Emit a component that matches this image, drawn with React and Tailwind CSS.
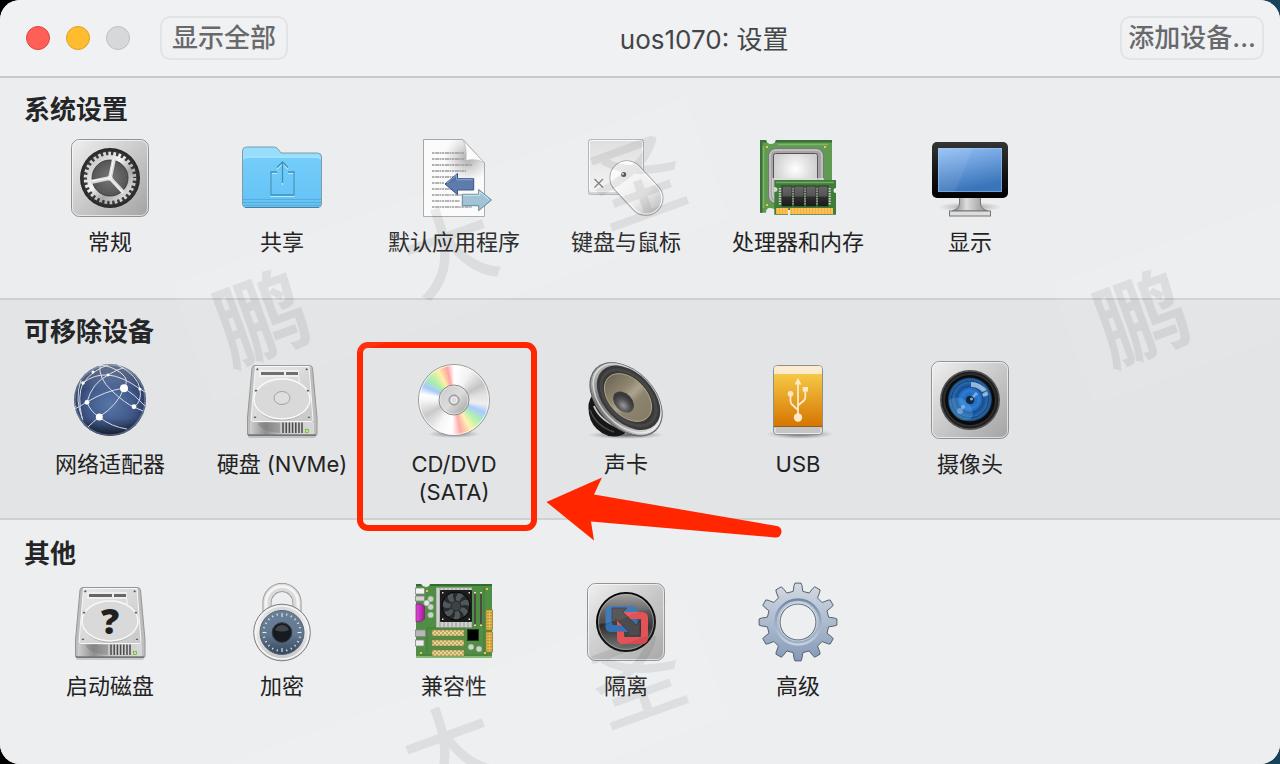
function Plate({ id }) {
  return (
    <>
      <defs>
        <linearGradient id={id} x1="0" y1="0" x2="1" y2="1">
          <stop offset="0" stopColor="#efefef" />
          <stop offset="1" stopColor="#a3a3a3" />
        </linearGradient>
      </defs>
      <rect x="1.5" y="1.5" width="77" height="77" rx="8" fill={`url(#${id})`} stroke="#929292" />
      <rect x="2.5" y="2.5" width="75" height="75" rx="7" fill="none" stroke="#fff" strokeOpacity=".6" />
    </>
  );
}

function GeneralIcon() {
  return (
    <svg viewBox="0 0 80 80" className="size-20">
      <defs>
        <linearGradient id="general-metal" x1="0" y1="0" x2="1" y2="1">
          <stop offset="0" stopColor="#bdbdbd" />
          <stop offset=".4" stopColor="#f4f4f4" />
          <stop offset=".65" stopColor="#a8a8a8" />
          <stop offset="1" stopColor="#ededed" />
        </linearGradient>
        <radialGradient id="general-well">
          <stop offset="0" stopColor="#777" />
          <stop offset=".6" stopColor="#555" />
          <stop offset="1" stopColor="#262626" />
        </radialGradient>
      </defs>
      <Plate id="general-plate" />
      <circle cx="40" cy="40" r="30" fill="url(#general-well)" />
      <circle cx="40" cy="40" r="24" fill="none" stroke="url(#general-metal)" strokeWidth="4.5" strokeDasharray="2.7 2.33" />
      <circle cx="40" cy="40" r="20.5" fill="none" stroke="url(#general-metal)" strokeWidth="5" />
      <circle cx="40" cy="40" r="18" fill="none" stroke="#333" strokeWidth=".8" />
      <path d="M40 40L44 21M40 40L54 55M40 40L21 44" stroke="#d9d9d9" strokeWidth="4" />
      <path d="M40 40L43.5 21M40 40L53 55M40 40L21 43" stroke="#fff" strokeWidth="1" />
      <circle cx="40" cy="40" r="2.5" fill="#eee" />
    </svg>
  );
}

function SharingIcon() {
  return (
    <svg viewBox="0 0 80 80" className="size-20">
      <defs>
        <linearGradient id="folder-front" x1="0" y1="0" x2="0" y2="1">
          <stop offset="0" stopColor="#74cdfa" />
          <stop offset="1" stopColor="#63c2f5" />
        </linearGradient>
      </defs>
      <path d="M.5 13q0-4 4-4H32q2.500 0 4 2l3 4H75.500q4 0 4 4V66q0 3.500-4 3.500H4.500q-4 0-4-3.500z" fill="#97defd" stroke="#7f9cab" />
      <path d="M1 24q0-4 4-4H75q4 0 4 4V65q0 4-4 4H5q-4 0-4-4z" fill="url(#folder-front)" />
      <path d="M2 20.500q1-1.500 4-1.500H74q3 0 4 1.500" fill="none" stroke="#a9e6ff" />
      <path d="M1 61.500H79M1 64.500H79M1 67.500H79" stroke="#54a6d3" strokeWidth=".8" />
      <path d="M3 69.500H77" stroke="#4b7f9b" />
      <path d="M35 34.500H29V57.500H52V34.500H46M40.500 46V24M35 30L40.500 24.500L46 30" fill="none" stroke="#b5eaff" strokeWidth="1.200" transform="translate(0 1)" />
      <path d="M35 34H29V57H52V34H46M40.500 45V24M35 29.500L40.500 24L46 29.500" fill="none" stroke="#3e93bd" strokeWidth="1.400" />
    </svg>
  );
}

const docLines = [50, 50, 58, 52, 44, 30, 38, 48, 46, 58];

function DefaultAppsIcon() {
  return (
    <svg viewBox="0 0 80 80" className="size-20">
      <defs>
        <linearGradient id="doc-fold" x1="0" y1="1" x2="1" y2="0">
          <stop offset="0" stopColor="#fff" />
          <stop offset=".6" stopColor="#fafafa" />
          <stop offset="1" stopColor="#dcdcdc" />
        </linearGradient>
        <radialGradient id="doc-shade" cx="54" cy="20" r="24" gradientUnits="userSpaceOnUse">
          <stop offset="0" stopColor="#777" stopOpacity=".6" />
          <stop offset="1" stopColor="#999" stopOpacity="0" />
        </radialGradient>
      </defs>
      <path d="M9.500 1.500H49L70.500 25V78.500H9.500z" fill="#fbfbfb" stroke="#a7a7a7" />
      <path d="M10 2H49L70 25V50H10z" fill="url(#doc-shade)" />
      {docLines.map((end, i) => (
        <path key={i} d={`M18 ${15 + i * 6}H${end}`} stroke="#999" strokeWidth="1.3" strokeDasharray="2.5 .7 4 .5 1.5 .6" />
      ))}
      <path d="M48.500 1.500Q53 8 52 22.500Q62 20 70.500 25z" fill="url(#doc-fold)" stroke="#b5b5b5" strokeWidth=".7" />
      <path d="M31 46L43.500 35.500V40.700H59.700V52H43.500V56.700z" fill="#5673a6" stroke="#2f4c85" />
      <path d="M33 45L42.500 37V41.700H58.700" fill="none" stroke="#86a2cf" />
      <path d="M77.500 62L64.700 51.500V56.300H48.300V67.700H64.700V72.700z" fill="#9cc0d3" stroke="#598199" />
      <path d="M49.300 57.300H65.700V53.800L75 61.500" fill="none" stroke="#d1e5ee" />
    </svg>
  );
}

function KeyboardMouseIcon() {
  return (
    <svg viewBox="0 0 80 80" className="size-20">
      <defs>
        <linearGradient id="key-face" x1="0" y1="0" x2="0" y2="1">
          <stop offset="0" stopColor="#dedede" />
          <stop offset="1" stopColor="#f3f3f3" />
        </linearGradient>
        <linearGradient id="mouse-body" x1="0" y1="0" x2="1" y2="0">
          <stop offset="0" stopColor="#fdfdfd" />
          <stop offset=".65" stopColor="#ededed" />
          <stop offset="1" stopColor="#bdbdbd" />
        </linearGradient>
      </defs>
      <rect x="2.500" y="1.500" width="55" height="55" rx="2" fill="#d5d5d5" stroke="#b3b3b3" />
      <rect x="3.500" y="2.500" width="53" height="51" rx="2" fill="url(#key-face)" stroke="#fafafa" />
      <path d="M8.500 41L17 49.500M17 41L8.500 49.500" stroke="#777" strokeWidth="1.200" />
      <g transform="rotate(47 50.500 50)">
        <rect x="20" y="34" width="62" height="34" rx="17" fill="#000" opacity=".12" />
        <rect x="19.500" y="33" width="62" height="34" rx="17" fill="url(#mouse-body)" stroke="#a6a6a6" />
        <rect x="20.700" y="34.200" width="59.600" height="31.600" rx="16" fill="none" stroke="#fff" />
      </g>
      <circle cx="37.700" cy="36.500" r="2.500" fill="#555" />
      <circle cx="37" cy="36" r="1" fill="#eee" />
    </svg>
  );
}

function ProcessorIcon() {
  return (
    <svg viewBox="0 0 80 80" className="size-20">
      <defs>
        <radialGradient id="cpu-face" cx=".5" cy=".35" r=".7">
          <stop offset="0" stopColor="#fff" />
          <stop offset="1" stopColor="#bcbcbc" />
        </radialGradient>
        <linearGradient id="ram-chip" x1="0" y1="0" x2="0" y2="1">
          <stop offset="0" stopColor="#686868" />
          <stop offset=".5" stopColor="#555" />
          <stop offset=".55" stopColor="#2e2e2e" />
          <stop offset="1" stopColor="#1b1b1b" />
        </linearGradient>
      </defs>
      <path d="M2 2H8Q9 6 13 6T18 2H74V74H18Q17 70 12 70Q8 70 8 74.700H2z" fill="#5f9b51" />
      <path d="M2 2H8L9 4.500H4.500V74.700H2zM18 2H74V4.500H17z" fill="#3c7037" />
      <path d="M5.500 8V70M20 6.500H70" stroke="#7db56c" strokeWidth="1.500" />
      <path d="M8 8h2v2h-2zM66 8h2v2h-2zM8 66h2v2h-2z" fill="#ffbd43" />
      <rect x="10.500" y="10.500" width="55" height="55" rx="7" fill="#a5a5a5" stroke="#777" />
      <rect x="12" y="12" width="52" height="52" rx="6" fill="none" stroke="#d7d7d7" />
      <rect x="15.500" y="15.500" width="44" height="44" rx="2" fill="url(#cpu-face)" stroke="#555" />
      <path d="M14 40H66V65H20Q14 62 14 56z" fill="#ddd" opacity=".75" />
      <path d="M16.300 42H78V50Q75.500 50 75.500 52.500T78 55V76.700H16.300V54Q19.500 54 19.500 51.500T16.300 49z" fill="#3f7b39" />
      <path d="M18 44.500H76" stroke="#74aa67" strokeWidth="1.500" />
      <path d="M22 50V67M35 50V67M47 50V67M59 50V67M71.500 50V67" stroke="#c8c8c8" strokeWidth="2.500" strokeDasharray="1.500 1" />
      {[24, 36, 48, 60].map((x) => (
        <rect key={x} x={x} y="48" width="10" height="20" fill="url(#ram-chip)" stroke="#222" strokeWidth=".7" />
      ))}
      <path d="M18 70H30V76H18zM32 70H75V76H32z" fill="#ffc052" />
      <path d="M18 73H75" stroke="#dd972e" strokeWidth="6" strokeDasharray=".6 2.400" opacity=".6" />
      <rect x="30" y="72" width="2" height="5" fill="#ecedef" />
    </svg>
  );
}

function DisplayIcon() {
  return (
    <svg viewBox="0 0 80 80" className="size-20">
      <defs>
        <linearGradient id="screen" x1="0" y1="0" x2=".3" y2="1">
          <stop offset="0" stopColor="#96c2f8" />
          <stop offset="1" stopColor="#3a74b9" />
        </linearGradient>
        <linearGradient id="bezel" x1="0" y1="0" x2="0" y2="1">
          <stop offset="0" stopColor="#343434" />
          <stop offset=".6" stopColor="#111" />
          <stop offset="1" stopColor="#000" />
        </linearGradient>
        <linearGradient id="neck" x1="0" y1="0" x2="1" y2="0">
          <stop offset="0" stopColor="#777" />
          <stop offset=".4" stopColor="#ddd" />
          <stop offset="1" stopColor="#8c8c8c" />
        </linearGradient>
        <radialGradient id="stand-shadow">
          <stop offset="0" stopColor="#555" stopOpacity=".6" />
          <stop offset="1" stopColor="#777" stopOpacity="0" />
        </radialGradient>
      </defs>
      <ellipse cx="40" cy="69" rx="32" ry="5" fill="url(#stand-shadow)" />
      <path d="M29.500 59H50.500V66Q51 71 58 73H22Q29 71 29.500 66z" fill="url(#neck)" stroke="#777" />
      <rect x="19.500" y="73" width="41" height="5" fill="#ddd" stroke="#777" />
      <rect x="2" y="4" width="76" height="56" rx="5" fill="url(#bezel)" />
      <rect x="8" y="10" width="64" height="44" fill="url(#screen)" />
      <path d="M8 10H43L25 54H8z" fill="#fff" opacity=".07" />
      <rect x="8.500" y="10.500" width="63" height="43" fill="none" stroke="#a4c9f5" strokeOpacity=".5" />
    </svg>
  );
}

function NetworkIcon() {
  return (
    <svg viewBox="0 0 80 80" className="size-20">
      <defs>
        <radialGradient id="globe" cx=".5" cy=".55" r=".55">
          <stop offset="0" stopColor="#5875a8" />
          <stop offset=".6" stopColor="#41598a" />
          <stop offset="1" stopColor="#223356" />
        </radialGradient>
        <linearGradient id="globe-shade" x1="0" y1="0" x2="0" y2="1">
          <stop offset="0" stopColor="#fff" stopOpacity=".3" />
          <stop offset=".35" stopColor="#fff" stopOpacity="0" />
          <stop offset=".75" stopColor="#000" stopOpacity="0" />
          <stop offset="1" stopColor="#000" stopOpacity=".6" />
        </linearGradient>
      </defs>
      <circle cx="40" cy="40" r="36" fill="url(#globe)" />
      <circle cx="40" cy="40" r="36" fill="url(#globe-shade)" />
      <g fill="none" stroke="#fff" strokeWidth="1" opacity=".8">
        <path d="M54 28Q35 31 17 42T6 46M54 28Q48 45 29 57Q22 63 18 67M54 28Q64 34 75 46" />
        <path d="M29 57Q42 67 57 69M17 42Q20 51 29 57M17 42Q22 23 38 15Q50 8 54 8" />
        <path d="M30 5Q28 18 42 31T64 47L73 51M30 5Q42 6 51 13T54 28" />
        <path d="M13 23Q24 14 38 15T70 29L75 32M13 23Q23 10 38 5M13 23Q7 36 12 58" />
        <path d="M11 20Q4 40 13 60M48 5Q68 16 70 29T64 47" />
      </g>
      <g fill="#fff">
        <circle cx="54" cy="28.300" r="4" />
        <circle cx="29.300" cy="57" r="3.500" />
        <circle cx="64" cy="46.700" r="2.400" />
        <circle cx="17" cy="42.300" r="2.400" />
        <circle cx="70" cy="29" r="1.600" />
        <circle cx="13" cy="23" r="1.800" />
        <circle cx="38" cy="15" r="1.400" />
        <circle cx="23" cy="12" r="1.500" />
      </g>
      <circle cx="40" cy="40" r="35" fill="none" stroke="#c3d0ea" strokeOpacity=".35" strokeWidth="1.500" />
    </svg>
  );
}

const screws = [
  [15.3, 9.3],
  [64.7, 9.3],
  [14, 30.7],
  [66, 30.7],
  [13, 57.3],
  [67, 57.3],
];

function DriveIcon({ id, question }) {
  return (
    <svg viewBox="0 0 80 80" className="size-20">
      <defs>
        <linearGradient id={`${id}-top`} x1="0" y1="0" x2="1" y2="1">
          <stop offset="0" stopColor="#e9e9e9" />
          <stop offset="1" stopColor="#c7c7c7" />
        </linearGradient>
        <linearGradient id={`${id}-front`} x1="0" y1="0" x2="1" y2="0">
          <stop offset="0" stopColor="#cfcfcf" />
          <stop offset=".25" stopColor="#8f8f8f" />
          <stop offset=".5" stopColor="#c9c9c9" />
          <stop offset="1" stopColor="#d8d8d8" />
        </linearGradient>
      </defs>
      <rect x="6" y="73" width="68" height="5" rx="2" fill="#000" opacity=".15" />
      <path d="M13 5.500H67.500Q70 5.500 70.500 8L75 58V74Q75 75.500 73.500 75.500H7Q5.500 75.500 5.500 74V58L10 8Q10.500 5.500 13 5.500z" fill="#bdbdbd" stroke="#969696" />
      <path d="M13.500 6.500H67L71 60Q71 61.500 69 61.500H11Q9 61.500 9 60z" fill={`url(#${id}-top)`} stroke="#f7f7f7" />
      <rect x="8" y="62" width="64" height="12.500" fill={`url(#${id}-front)`} />
      <path d="M16 63H38V73Q22 72 17 66z" fill="#777" opacity=".45" />
      <path d="M41 62.500V73M44.200 62.500V73M47.400 62.500V73M50.600 62.500V73M53.800 62.500V73M57 62.500V73M60 62.500V73" stroke="#4a4a4a" strokeWidth="1.500" />
      <path d="M6 75H74" stroke="#555" strokeWidth="1.200" />
      <rect x="63.500" y="69.500" width="3" height="3" fill="#a8ff60" stroke="#68973b" strokeWidth=".6" />
      <ellipse cx="40" cy="40" rx="28" ry="20.500" fill="#a8a8a8" />
      <ellipse cx="40" cy="39" rx="28" ry="20" fill="#d9d9d9" stroke="#f9f9f9" strokeWidth="1.400" />
      <rect x="17" y="10" width="40" height="7" fill="#eee" />
      <path d="M57 17V23" stroke="#f6f6f6" />
      <rect x="19" y="12" width="23" height="3" fill="#666" />
      <rect x="44" y="12" width="12" height="3" fill="#666" />
      {!question && <ellipse cx="40" cy="38" rx="8" ry="6.500" fill="#dedede" stroke="#a2a2a2" />}
      {screws.map(([x, y]) => (
        <circle key={`${x}-${y}`} cx={x} cy={y} r="1.400" fill="#555" stroke="#eee" strokeWidth=".7" />
      ))}
      {question && (
        <text x="40" y="52" textAnchor="middle" fill="#202020" className="font-['Open_Sans',sans-serif] text-[36px] font-extrabold">
          ?
        </text>
      )}
    </svg>
  );
}

function DiscIcon() {
  return (
    <svg viewBox="0 0 80 80" className="size-20">
      <defs>
        <radialGradient id="disc-shadow">
          <stop offset="0" stopColor="#333" stopOpacity=".6" />
          <stop offset="1" stopColor="#555" stopOpacity="0" />
        </radialGradient>
        <linearGradient id="disc-hub" x1="0" y1="0" x2="1" y2="1">
          <stop offset="0" stopColor="#c9c9c9" />
          <stop offset=".5" stopColor="#dcdcdc" />
          <stop offset="1" stopColor="#9b9b9b" />
        </linearGradient>
      </defs>
      <ellipse cx="40" cy="74" rx="26" ry="4" fill="url(#disc-shadow)" />
      <foreignObject x="4" y="4" width="72" height="72">
        <div className="size-[72px] rounded-full border border-[#999] bg-[conic-gradient(#fff_0deg,#f2f2f2_30deg,#c4c4c4_62deg,#e2e2e2_80deg,#eee_98deg,#a9caff_112deg,#b0f0b0_130deg,#fff3ae_150deg,#ffa9a9_168deg,#fff_184deg,#f6f6f6_210deg,#c9c9c9_242deg,#f5f5f5_268deg,#fff_280deg,#a9c8ff_294deg,#a9efad_312deg,#fff0a6_332deg,#ffa3a3_348deg,#fff_360deg)]" />
      </foreignObject>
      <circle cx="40" cy="40" r="34.500" fill="none" stroke="#fff" strokeOpacity=".7" />
      <circle cx="40" cy="40" r="15" fill="url(#disc-hub)" stroke="#888" />
      <circle cx="40" cy="40" r="14" fill="none" stroke="#eee" strokeOpacity=".6" />
      <circle cx="40" cy="40" r="5" fill="#c9c9c9" stroke="#8b8b8b" />
      <circle cx="40" cy="40" r="3" fill="#ddd" stroke="#eee" />
    </svg>
  );
}

function SoundIcon() {
  return (
    <svg viewBox="0 0 80 80" className="size-20">
      <defs>
        <linearGradient id="speaker-rim" x1="0" y1="0" x2="1" y2="0">
          <stop offset="0" stopColor="#b9b9b9" />
          <stop offset=".3" stopColor="#777" />
          <stop offset=".6" stopColor="#8b8b8b" />
          <stop offset="1" stopColor="#e6e6e6" />
        </linearGradient>
        <linearGradient id="speaker-cone" x1="0" y1="0" x2="1" y2="0">
          <stop offset="0" stopColor="#6f6758" />
          <stop offset=".35" stopColor="#91876f" />
          <stop offset=".5" stopColor="#aca48f" />
          <stop offset=".65" stopColor="#8d8470" />
          <stop offset="1" stopColor="#857b66" />
        </linearGradient>
        <radialGradient id="speaker-cap" cx=".6" cy=".65">
          <stop offset="0" stopColor="#999" />
          <stop offset=".6" stopColor="#555" />
          <stop offset="1" stopColor="#393939" />
        </radialGradient>
        <radialGradient id="speaker-shadow">
          <stop offset="0" stopColor="#222" stopOpacity=".7" />
          <stop offset="1" stopColor="#555" stopOpacity="0" />
        </radialGradient>
      </defs>
      <ellipse cx="40" cy="75" rx="38" ry="4" fill="url(#speaker-shadow)" />
      <path d="M6 36Q1 42 3 54Q5 66 16 73Q26 79 36 75Q41 73 42 68L40 50z" fill="#161616" />
      <path d="M4 50Q10 66 28 72" fill="none" stroke="#4a4a4a" strokeWidth="1.500" />
      <path d="M8 46Q14 61 36 69" fill="none" stroke="#c6c6c6" strokeWidth="2" />
      <g transform="rotate(46 40.300 39)">
        <ellipse cx="40.300" cy="39.500" rx="43.500" ry="28.500" fill="#5e5e5e" />
        <ellipse cx="40.300" cy="39" rx="42.500" ry="28" fill="url(#speaker-rim)" stroke="#777" />
        <ellipse cx="40.300" cy="38" rx="40.500" ry="26" fill="none" stroke="#eee" strokeWidth="1.500" opacity=".7" />
        <ellipse cx="41" cy="36.500" rx="38" ry="24.500" fill="#393939" />
        <ellipse cx="41" cy="36.500" rx="33" ry="21" fill="none" stroke="#474747" strokeWidth="3" />
      </g>
      <ellipse cx="42" cy="37.500" rx="28" ry="18.500" fill="url(#speaker-cone)" stroke="#c0b391" strokeWidth=".8" transform="rotate(46 42 37.500)" />
      <ellipse cx="37.500" cy="42" rx="12" ry="8.500" fill="url(#speaker-cap)" transform="rotate(46 37.500 42)" />
    </svg>
  );
}

function UsbIcon() {
  return (
    <svg viewBox="0 0 80 80" className="size-20">
      <defs>
        <linearGradient id="usb-orange" x1="0" y1="0" x2="0" y2="1">
          <stop offset="0" stopColor="#f6c846" />
          <stop offset="1" stopColor="#d57600" />
        </linearGradient>
        <radialGradient id="usb-shadow">
          <stop offset="0" stopColor="#222" stopOpacity=".7" />
          <stop offset="1" stopColor="#555" stopOpacity="0" />
        </radialGradient>
      </defs>
      <ellipse cx="42" cy="74" rx="33" ry="5" fill="url(#usb-shadow)" />
      <rect x="15.500" y="5.500" width="49" height="69" rx="4" fill="#c5c5c5" stroke="#8e8e8e" />
      <path d="M16 14V9Q16 6 19 6H61Q64 6 64 9V14z" fill="#faebd1" />
      <rect x="16" y="14" width="48" height="52" fill="url(#usb-orange)" />
      <path d="M16 66.500H64" stroke="#8a6025" />
      <path d="M17 68V72Q17 73.500 19 73.500H61Q63 73.500 63 72V68" fill="none" stroke="#eee" />
      <g fill="#ffe9c8" stroke="#ffe9c8">
        <path d="M40 22V56M32.500 34V41Q32.500 43 34 44.500L40 50M47.300 30V37Q47.300 39 46 40.500L40 45.500" fill="none" strokeWidth="1.800" />
        <path d="M40 18L43.500 24.500H36.500z" stroke="none" />
        <circle cx="32.500" cy="33.700" r="2.800" stroke="none" />
        <rect x="44.700" y="27" width="5.300" height="4.500" stroke="none" />
        <circle cx="40" cy="57.500" r="4.200" stroke="none" />
      </g>
    </svg>
  );
}

function CameraIcon() {
  return (
    <svg viewBox="0 0 80 80" className="size-20">
      <defs>
        <radialGradient id="lens">
          <stop offset="0" stopColor="#1b4f8c" />
          <stop offset=".4" stopColor="#2b7dd6" />
          <stop offset=".65" stopColor="#1c5296" />
          <stop offset=".85" stopColor="#3176bd" />
          <stop offset="1" stopColor="#153c66" />
        </radialGradient>
      </defs>
      <Plate id="camera-plate" />
      <circle cx="40" cy="40" r="30" fill="#505050" />
      <circle cx="40" cy="40" r="27.500" fill="#2f2f2f" stroke="#1d1d1d" strokeWidth="1.500" />
      <circle cx="40" cy="40" r="25" fill="#0b0b0b" />
      <circle cx="40" cy="39.500" r="22" fill="url(#lens)" />
      <circle cx="40" cy="39.500" r="18.500" fill="none" stroke="#174a82" strokeWidth="1.500" />
      <circle cx="40" cy="39.500" r="13" fill="none" stroke="#164780" />
      <path d="M19 40Q28 34 37 42T41 59Q29 64 22 52Q18 46 19 40z" fill="#69b4ea" opacity=".3" />
      <path d="M41 22Q50 22 57 30L52 32Q48 27 41 27z" fill="#c3ddf4" opacity=".7" />
      <path d="M52 34L57 31L58.500 35L53.500 37z" fill="#dcecfb" opacity=".6" />
      <path d="M40 40L47 33" stroke="#a5ccf5" strokeWidth="3" opacity=".6" />
      <circle cx="40" cy="40" r="4" fill="#102740" />
      <circle cx="41.500" cy="39" r="1.500" fill="#8ea9c4" />
      <circle cx="33" cy="47" r="2" fill="#bce0fa" opacity=".5" />
      <circle cx="30" cy="51" r="3" fill="#bce0fa" opacity=".4" />
    </svg>
  );
}

function LockIcon() {
  const ticks = Array.from({ length: 24 }, (_, i) => i * 15);
  return (
    <svg viewBox="0 0 80 80" className="size-20">
      <defs>
        <linearGradient id="lock-metal" x1="0" y1="0" x2="0" y2="1">
          <stop offset="0" stopColor="#d3d3d3" />
          <stop offset=".4" stopColor="#f0f0f0" />
          <stop offset="1" stopColor="#c4c4c4" />
        </linearGradient>
        <linearGradient id="lock-dial" x1="0" y1="0" x2="0" y2="1">
          <stop offset="0" stopColor="#6b819b" />
          <stop offset=".55" stopColor="#63788e" />
          <stop offset="1" stopColor="#32475c" />
        </linearGradient>
      </defs>
      <path d="M25 36V20.600a15 15 0 0 1 30 0V36" fill="none" stroke="#8d8d8d" strokeWidth="9" />
      <path d="M25 36V20.600a15 15 0 0 1 30 0V36" fill="none" stroke="#dadada" strokeWidth="7.500" />
      <path d="M24 30V20.600a16 16 0 0 1 32 0V30" fill="none" stroke="#f4f4f4" strokeWidth="3" />
      <circle cx="40" cy="50.500" r="28.300" fill="url(#lock-metal)" stroke="#808080" />
      <circle cx="40" cy="50.500" r="26.500" fill="none" stroke="#f6f6f6" strokeWidth="1.500" />
      <circle cx="40" cy="50.500" r="22" fill="url(#lock-dial)" stroke="#54616f" />
      {ticks.map((deg) => (
        <path key={deg} d={deg % 90 === 0 ? 'M40 31V35' : 'M40 31V33'} stroke="#e4ebf2" strokeWidth="1.100" transform={`rotate(${deg} 40 50.500)`} />
      ))}
      <circle cx="40" cy="50.500" r="9.800" fill="#171b1f" stroke="#2e3943" />
      <path d="M33 48Q35 43 40 43T47 48Q40 51 33 48z" fill="#5b636a" opacity=".6" />
    </svg>
  );
}

function BoardIcon() {
  const blades = [0, 51, 103, 154, 206, 257, 309];
  return (
    <svg viewBox="0 0 80 80" className="size-20">
      <defs>
        <pattern id="gold-pins" width="4" height="4" patternUnits="userSpaceOnUse">
          <rect width="4" height="4" fill="#c2aa60" />
          <path d="M0 0H2V2H0zM2 2H4V4H2z" fill="#e4d69c" />
        </pattern>
        <linearGradient id="magenta" x1="0" y1="0" x2="1" y2="0">
          <stop offset="0" stopColor="#e04ad6" />
          <stop offset="1" stopColor="#a31b97" />
        </linearGradient>
      </defs>
      <path d="M2 2H7Q9 5 12 5T16 2H78V76H2z" fill="#508e45" />
      <path d="M16 2H78V4H16zM2 2H7L8 4H2z" fill="#346b30" />
      <path d="M2 75H78" stroke="#85bb71" strokeWidth="2" />
      <path d="M13 70V46H52M70 6V70M6 73H74" fill="none" stroke="#3c7635" strokeWidth=".7" />
      <path d="M12 8h2v2h-2zM72 6h2v2h-2zM6 70h2v2h-2zM70 70h2v2h-2z" fill="#ffc04a" />
      <rect x="22" y="5.500" width="36" height="40" fill="#b5b5b5" />
      <path d="M24 6V45M28 6V45M32 6V45M36 6V45M40 6V45M44 6V45M48 6V45M52 6V45M56 6V45" stroke="#dadada" strokeWidth="1.500" />
      <rect x="26" y="8" width="32" height="32" rx="1" fill="#1c1c1c" />
      <circle cx="42" cy="24" r="14" fill="#262b2d" stroke="#050505" />
      {blades.map((deg) => (
        <path key={deg} d="M42 20Q41 13 45 11Q49 12 50 14Q46 16 45 21z" fill="#50585a" transform={`rotate(${deg} 42 24)`} />
      ))}
      <circle cx="42" cy="24" r="5" fill="#3b4346" stroke="#24292b" />
      <path d="M28 10h1.500v1.500H28zM54.500 10H56v1.500h-1.500zM28 36.500h1.500V38H28zM54.500 36.500H56V38h-1.500z" fill="#ddd" />
      <path d="M61 10V44M67 10V44" stroke="#4b4b43" strokeWidth="2" />
      <path d="M60 10h2v1.500h-2zM66 10h2v1.500h-2zM60 42.500h2V44h-2zM66 42.500h2V44h-2z" fill="#f2dfa2" />
      <g fill="url(#gold-pins)" stroke="#8b793e" strokeWidth=".6">
        <rect x="18" y="48" width="32" height="6" />
        <rect x="18" y="58" width="32" height="6" />
        <rect x="18" y="68" width="32" height="6" />
      </g>
      <g fill="#e6bd50" stroke="#967a30" strokeWidth=".8">
        <rect x="72" y="28" width="6.500" height="20" />
        <rect x="72" y="50" width="6.500" height="20" />
      </g>
      <path d="M74 30V47M77 30V47M74 52V69M77 52V69" stroke="#9c6d1b" strokeDasharray="1.500 1.500" />
      <rect x="53.500" y="47.500" width="11" height="11" fill="#000" stroke="#263420" />
      <g stroke="#858585" strokeWidth=".8">
        <rect x="1.500" y="6" width="9" height="6" fill="#f3f3f3" />
        <rect x="1.500" y="14" width="9" height="5" fill="#d3d3d3" />
        <rect x="1.500" y="48" width="10" height="6.500" fill="#b7b7b7" />
        <rect x="1.500" y="58" width="8.500" height="6" fill="#ececec" />
      </g>
      <path d="M2 22H6L10.500 24V37L6 39.700H2z" fill="url(#magenta)" stroke="#7c2175" strokeWidth=".7" />
      <g fill="#c8d7c5" stroke="#7f967a" strokeWidth=".6">
        <circle cx="16.700" cy="17" r="3" />
        <circle cx="16.700" cy="25" r="3" />
        <circle cx="16.700" cy="33" r="3" />
        <circle cx="12.700" cy="21" r="3" fill="#e3ebe1" />
        <circle cx="57" cy="65" r="3" />
        <circle cx="65" cy="67" r="3" />
      </g>
    </svg>
  );
}

function IsolationIcon() {
  return (
    <svg viewBox="0 0 80 80" className="size-20">
      <defs>
        <linearGradient id="iso-well" x1="0" y1="0" x2="0" y2="1">
          <stop offset="0" stopColor="#9a9a9a" />
          <stop offset=".35" stopColor="#4b4b4b" />
          <stop offset=".6" stopColor="#292929" />
          <stop offset="1" stopColor="#777" />
        </linearGradient>
      </defs>
      <Plate id="iso-plate" />
      <circle cx="40" cy="40" r="29" fill="url(#iso-well)" stroke="#050505" strokeWidth="2" />
      <circle cx="40" cy="40" r="27.500" fill="none" stroke="#bbb" strokeOpacity=".6" />
      <rect x="23" y="27.500" width="25" height="19" rx="2" fill="none" stroke="#2869ad" strokeWidth="7" />
      <rect x="34.500" y="33.500" width="24" height="25" rx="2" fill="none" stroke="#e1484c" strokeWidth="7" />
      <path d="M28 46.500H48V38" fill="none" stroke="#2869ad" strokeWidth="6" />
      <path d="M26 26H41L37 30L50 43L54 39V54H39L43 50L30 37L26 41z" fill="#414144" stroke="#262626" strokeWidth=".7" />
      <path d="M12 42A28 28 0 0 1 65 27Q49 31 39 36T12 42z" fill="#fff" opacity=".12" />
    </svg>
  );
}

const cogPath = (() => {
  const teeth = 12;
  const profile = [
    [31, -9],
    [37, -6],
    [39, -4.5],
    [39, 4.5],
    [37, 6],
    [31, 9],
  ];
  const points = [];
  for (let i = 0; i < teeth; i++) {
    profile.forEach(([r, offset]) => {
      const a = ((i * 360) / teeth + offset) * (Math.PI / 180);
      points.push(`${(40 + r * Math.sin(a)).toFixed(2)} ${(40 - r * Math.cos(a)).toFixed(2)}`);
    });
  }
  return `M${points.join('L')}zM58 40a18 18 0 1 0-36 0a18 18 0 1 0 36 0z`;
})();

function AdvancedIcon() {
  return (
    <svg viewBox="0 0 80 80" className="size-20">
      <defs>
        <linearGradient id="cog" x1="0" y1="0" x2="0" y2="1">
          <stop offset="0" stopColor="#d3dae3" />
          <stop offset=".5" stopColor="#adbbce" />
          <stop offset="1" stopColor="#8499b7" />
        </linearGradient>
        <linearGradient id="cog-groove" x1="0" y1="0" x2="0" y2="1">
          <stop offset="0" stopColor="#7288a7" />
          <stop offset="1" stopColor="#c5d1e0" />
        </linearGradient>
      </defs>
      <path d={cogPath} fill="url(#cog)" fillRule="evenodd" stroke="#58616c" strokeLinejoin="round" />
      <circle cx="40" cy="40" r="22.500" fill="none" stroke="url(#cog-groove)" strokeWidth="2.500" />
      <circle cx="40" cy="40" r="19" fill="none" stroke="#e4ebf3" strokeOpacity=".6" />
    </svg>
  );
}

// Red frame and arrow drawn over the highlighted device
function Callout() {
  return (
    <svg viewBox="0 0 430 204" className="pointer-events-none absolute -top-5 -left-3 h-[204px] w-[430px] max-w-none" aria-hidden="true">
      <rect x="4" y="5" width="174" height="183" rx="8" fill="none" stroke="#ff2600" strokeWidth="6" />
      <path d="M190.500 162L246 137.500L238 154.500L421 186Q425.500 187 425.500 192Q424.500 198 419 197.500L235 181.500L238 200.500z" fill="#ff2600" />
    </svg>
  );
}

function Watermark({ className }) {
  return (
    <div
      aria-hidden="true"
      className={`pointer-events-none absolute flex h-32 w-max -translate-x-1/2 -translate-y-1/2 -rotate-20 items-center gap-27 bg-white/6 px-7 text-[92px] leading-none font-medium text-black/7 select-none ${className}`}
    >
      <span className="font-bold">鹏</span>
      <span>大</span>
      <span>圣</span>
    </div>
  );
}

const sections = [
  {
    title: '系统设置',
    className: 'border-[#c9cacc] bg-[#ecedef] pt-4 pb-3.5',
    items: [
      { label: '常规', icon: <GeneralIcon /> },
      { label: '共享', icon: <SharingIcon /> },
      { label: '默认应用程序', icon: <DefaultAppsIcon /> },
      { label: '键盘与鼠标', icon: <KeyboardMouseIcon /> },
      { label: '处理器和内存', icon: <ProcessorIcon /> },
      { label: '显示', icon: <DisplayIcon /> },
    ],
  },
  {
    title: '可移除设备',
    className: 'border-[#cfd0d2] bg-[#e3e4e6] pt-4 pb-3',
    items: [
      { label: '网络适配器', icon: <NetworkIcon /> },
      { label: '硬盘 (NVMe)', icon: <DriveIcon id="nvme" /> },
      { label: 'CD/DVD (SATA)', icon: <DiscIcon />, highlighted: true },
      { label: '声卡', icon: <SoundIcon /> },
      { label: 'USB', icon: <UsbIcon /> },
      { label: '摄像头', icon: <CameraIcon /> },
    ],
  },
  {
    title: '其他',
    className: 'flex-1 border-[#cfd0d2] bg-[#edeef0] pt-4.5 pb-3',
    items: [
      { label: '启动磁盘', icon: <DriveIcon id="startup" question /> },
      { label: '加密', icon: <LockIcon /> },
      { label: '兼容性', icon: <BoardIcon /> },
      { label: '隔离', icon: <IsolationIcon /> },
      { label: '高级', icon: <AdvancedIcon /> },
    ],
  },
];

function SettingsItem({ item }) {
  return (
    <button type="button" className={`flex flex-col items-center gap-2.5 ${item.highlighted ? 'relative' : ''}`}>
      {item.icon}
      <span className={`min-h-14 text-[22px] leading-7 text-[#222] ${item.highlighted ? 'w-24' : ''}`}>{item.label}</span>
      {item.highlighted && <Callout />}
    </button>
  );
}

export default function App() {
  return (
    <div className="flex min-h-screen bg-linear-to-r from-black to-[#17445a] font-[Inter,'Noto_Sans_CJK_SC',sans-serif]">
      <div className="relative flex flex-1 flex-col overflow-hidden rounded-[20px] bg-[#edeef0]">
        <header className="flex h-19 items-center bg-[#f0f1f3] pr-4 pl-6.5">
          <div className="flex gap-4">
            <button type="button" aria-label="关闭" className="size-6 rounded-full border border-[#e0443e] bg-[#ff5f57]" />
            <button type="button" aria-label="最小化" className="size-6 rounded-full border border-[#dea123] bg-[#febc2e]" />
            <button type="button" aria-label="缩放" disabled className="size-6 rounded-full border border-[#bfc0c1] bg-[#d7d8d9]" />
          </div>
          <button type="button" className="ml-7.5 flex h-11 items-center rounded-[10px] border-2 border-[#e2e3e5] px-2.5 pb-0.5 text-[26px] font-medium text-[#68696b]">
            显示全部
          </button>
          <h1 className="flex-1 px-2 pt-0.5 text-center text-[26px] text-[#444547]">uos1070: 设置</h1>
          <button type="button" className="flex h-11 items-center rounded-[10px] border-2 border-[#e2e3e5] px-1.5 pb-0.5 text-[26px] font-medium text-[#68696b]">
            添加设备...
          </button>
        </header>

        {sections.map((section) => (
          <section key={section.title} className={`border-t-2 px-6 ${section.className}`}>
            <h2 className="mb-3 text-[26px] leading-8 font-bold text-[#242526]">{section.title}</h2>
            <div className="grid grid-cols-[repeat(auto-fill,172px)]">
              {section.items.map((item) => (
                <SettingsItem key={item.label} item={item} />
              ))}
            </div>
          </section>
        ))}

        <Watermark className="top-[251px] left-[450px]" />
        <Watermark className="top-[750px] left-[450px]" />
        <Watermark className="top-[251px] left-[1330px]" />
      </div>
    </div>
  );
}
